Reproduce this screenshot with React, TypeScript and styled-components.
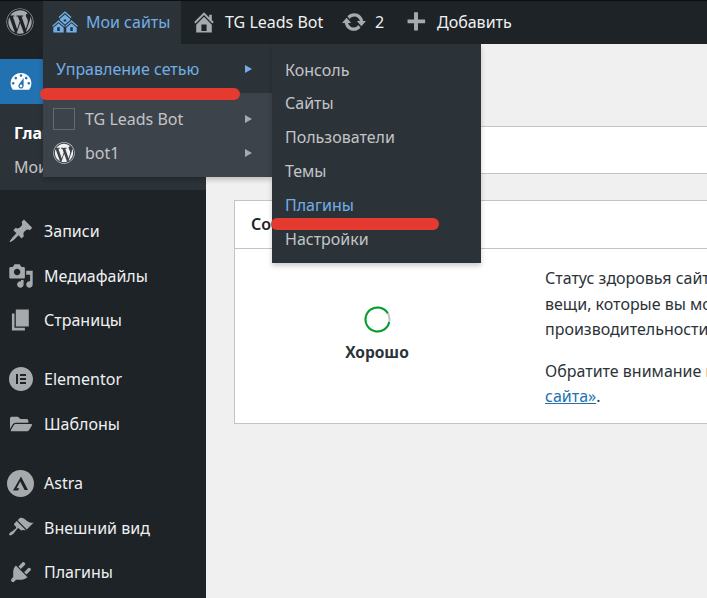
import React from 'react'
import styled, { createGlobalStyle } from 'styled-components'
import { FaWordpress, FaFolderOpen } from 'react-icons/fa'
import { SiElementor } from 'react-icons/si'

const FONT = `"Noto Sans", "Open Sans", sans-serif`

const GlobalStyle = createGlobalStyle`
  html, body {
    margin: 0;
    padding: 0;
    overflow: hidden;
    background: #f0f0f1;
    font-family: ${FONT};
  }
`

const ICONS = {
  multisite:
    'M14.27 6.87L10 3.14 5.73 6.87 5 6.14l5-4.38 5 4.38zM14 8.42l-4.05 3.43L6 8.38v-.74l4-3.5 4 3.5v.78zM11 9.7V8H9v1.7h2zm-1.73 4.03L5 10 .73 13.73 0 13l5-4.38L10 13zm10 0L15 10l-4.27 3.73L10 13l5-4.38L20 13zM5 11l4 3.5V18H1v-3.5zm10 0l4 3.5V18h-8v-3.5zM6 17v-3H4v3h2zm10 0v-3h-2v3h2z',
  home: 'M16 8.5l1.53 1.53-1.06 1.06L10 4.62l-6.47 6.47-1.06-1.06L10 2.5l4 4v-2h2v4zm-6-2.46l6 5.99V18H4v-5.97zM12 17v-5H8v5h4z',
  update:
    'M10.2 3.28c3.53 0 6.43 2.61 6.92 6h2.08l-3.5 4-3.5-4h2.32c-.45-1.97-2.21-3.45-4.32-3.45-1.45 0-2.73.71-3.54 1.78L4.95 5.66C6.23 4.2 8.11 3.28 10.2 3.28zm-.4 13.44c-3.52 0-6.43-2.61-6.92-6H.8l3.5-4c1.17 1.33 2.33 2.67 3.5 4H5.48c.45 1.97 2.21 3.45 4.32 3.45 1.45 0 2.73-.71 3.54-1.78l1.71 1.95c-1.28 1.46-3.15 2.38-5.25 2.38z',
  plus: 'M17 8v3h-5.5v5.5h-3V11H3.500V8h5V2.500h3V8z',
  dashboard:
    'M3.76 16h12.48c1.1-1.37 1.76-3.11 1.76-5 0-4.42-3.58-8-8-8s-8 3.58-8 8c0 1.89.66 3.63 1.76 5zM10 4c.55 0 1 .45 1 1s-.45 1-1 1-1-.45-1-1 .45-1 1-1zM6 6c.55 0 1 .45 1 1s-.45 1-1 1-1-.45-1-1 .45-1 1-1zm8 0c.55 0 1 .45 1 1s-.45 1-1 1-1-.45-1-1 .45-1 1-1zm-5.37 5.55L12 7v6c0 1.1-.9 2-2 2s-2-.9-2-2c0-.57.24-1.08.63-1.45zM4 10c.55 0 1 .45 1 1s-.45 1-1 1-1-.45-1-1 .45-1 1-1zm12 0c.55 0 1 .45 1 1s-.45 1-1 1-1-.45-1-1 .45-1 1-1zm-5 3c0-.55-.45-1-1-1s-1 .45-1 1 .45 1 1 1 1-.45 1-1z',
  post: 'M10.44 3.02l1.82-1.82 6.36 6.35-1.83 1.82c-1.05-.68-2.48-.57-3.41.36l-.75.75c-.92.93-1.04 2.35-.35 3.41l-1.83 1.82-2.41-2.41-2.8 2.79c-.42.42-3.38 2.71-3.8 2.29s1.86-3.39 2.28-3.81l2.79-2.79L4.100 9.360l1.83-1.82c1.05.69 2.48.57 3.4-.36l.75-.75c.93-.92 1.05-2.35.36-3.41z',
  media:
    'M13 11V4c0-.55-.45-1-1-1h-1.67L9 1H5L3.67 3H2c-.55 0-1 .45-1 1v7c0 .55.45 1 1 1h10c.55 0 1-.45 1-1zM7 4.500c1.380 0 2.500 1.120 2.500 2.500S8.380 9.500 7 9.500 4.500 8.380 4.500 7 5.620 4.500 7 4.500zM14 6h5v10.500c0 1.380-1.120 2.500-2.500 2.500S14 17.880 14 16.500s1.120-2.500 2.500-2.500c.17 0 .34.02.5.05V9h-3V6zm-4 8.050V13h2v3.500c0 1.380-1.120 2.500-2.500 2.500S7 17.880 7 16.500 8.120 14 9.500 14c.17 0 .34.02.5.05z',
  page: 'M6 15V2h10v13H6zm-1 1h8v2H3V5h2v11z',
  appearance:
    'M14.48 11.06L7.41 3.99l1.5-1.5c.5-.56 2.3-.47 3.51.32 1.21.8 1.43 1.28 2.91 2.100 1.180.64 2.450 1.260 4.450.85zm-.71.71L6.700 4.700 4.930 6.470c-.39.39-.39 1.020 0 1.410l1.060 1.060c.39.39.39 1.030 0 1.420-.6.6-1.430 1.110-2.210 1.690-.35.26-.7.53-1.010.84C1.430 13.230.4 14.750 1.100 15.450c.7.7 2.220-.33 3.560-1.670.31-.31.58-.66.84-1.010.58-.78 1.090-1.610 1.690-2.210.39-.39 1.030-.39 1.420 0l1.060 1.060c.39.39 1.020.39 1.410 0z',
  plugins:
    'M13.110 4.360L9.870 7.600 8 5.730l3.240-3.240c.35-.34 1.050-.2 1.560.32.52.51.66 1.210.31 1.550zm-8 1.770l.91-1.120 9.010 9.010-1.190.84c-.71.71-2.630 1.160-3.820 1.160H6.140L4.900 17.260c-.59.59-1.540.59-2.120 0-.59-.58-.59-1.530 0-2.120l1.240-1.240v-3.880c0-1.130.4-3.190 1.090-3.890zm7.260 3.970l3.240-3.240c.34-.35 1.040-.21 1.550.31.52.51.66 1.210.31 1.550l-3.240 3.250z',
}

const Dashicon: React.FC<{ d: string; size?: number }> = ({ d, size = 26 }) => (
  <svg width={size} height={size} viewBox="0 0 20 20" fill="currentColor">
    <path d={d} />
  </svg>
)

const AstraIcon = () => (
  <svg width="27" height="27" viewBox="0 0 27 27">
    <circle cx="13.5" cy="13.5" r="13.5" fill="currentColor" />
    <path d="M14 6.5 L21 20 H17.6 L13.2 11.4 L9.6 18.2 L12.4 18.2 L11 20.5 H6 Z" fill="#1d2327" />
  </svg>
)

const HealthRing = () => (
  <svg width="27" height="27" viewBox="0 0 27 27" fill="none">
    <circle cx="13.5" cy="13.5" r="12" stroke="#c3c4c7" strokeWidth="2" />
    <circle cx="13.5" cy="13.5" r="12" stroke="#00a32a" strokeWidth="2" strokeDasharray="66 75.4" transform="rotate(12 13.5 13.5)" />
  </svg>
)

const Page = styled.div`
  position: relative;
  width: 707px;
  height: 598px;
  overflow: hidden;
  background: #f0f0f1;
`

const TopBar = styled.header`
  display: flex;
  align-items: stretch;
  height: 43px;
  border-top: 1px solid #0c0e10;
  background: #1d2327;
  color: #f0f0f1;
  font-size: 16px;
`

const BarItem = styled.div<{ $active?: boolean; $width: number; $pad?: number }>`
  display: flex;
  align-items: center;
  gap: 8px;
  width: ${(p) => p.$width}px;
  padding-left: ${(p) => p.$pad ?? 10}px;
  padding-bottom: 1px;
  box-sizing: border-box;
  background: ${(p) => (p.$active ? '#2c3338' : 'transparent')};
  color: ${(p) => (p.$active ? '#72aee6' : '#f0f0f1')};
  white-space: nowrap;
  svg {
    flex: none;
    color: ${(p) => (p.$active ? '#72aee6' : '#a7aaad')};
  }
`

const Layout = styled.div`
  display: flex;
  height: 554px;
`

const Sidebar = styled.nav`
  flex: none;
  width: 206px;
  padding-top: 15px;
  background: #1d2327;
  color: #f0f0f1;
  font-size: 16px;
`

const ActiveRow = styled.div`
  display: flex;
  align-items: center;
  height: 45px;
  padding-left: 8px;
  background: #2271b1;
  color: #fff;
`

const SubPanel = styled.div`
  height: 68px;
  padding: 9px 14px;
  margin-bottom: 19px;
  background: #2c3338;
`

const SubLink = styled.div<{ $current?: boolean }>`
  height: 34px;
  line-height: 40px;
  font-weight: ${(p) => (p.$current ? 700 : 400)};
  color: ${(p) => (p.$current ? '#fff' : '#c3c4c7')};
`

const MenuGroup = styled.div`
  margin-bottom: 14.4px;
`

const MenuRow = styled.div`
  display: flex;
  align-items: center;
  height: 44.6px;
  color: #f0f0f1;
`

const MenuIcon = styled.span`
  flex: none;
  display: flex;
  align-items: center;
  justify-content: center;
  width: 44px;
  height: 100%;
  padding-right: 3px;
  box-sizing: border-box;
  color: #a7aaad;
`

const Main = styled.main`
  flex: 1;
  min-width: 0;
  padding-top: 82px;
`

const NoticeBar = styled.div`
  height: 46px;
  border-top: 1px solid #c3c4c7;
  border-bottom: 1px solid #c3c4c7;
  background: #fff;
`

const Card = styled.section`
  width: 700px;
  margin: 26px 0 0 28px;
  border: 1px solid #c3c4c7;
  background: #fff;
  color: #2c3338;
`

const CardTitle = styled.h2`
  margin: 0;
  height: 47px;
  padding-left: 16px;
  border-bottom: 1px solid #c3c4c7;
  color: #1d2327;
  font-size: 16px;
  font-weight: 600;
  line-height: 47px;
  white-space: nowrap;
`

const CardBody = styled.div`
  display: grid;
  grid-template-columns: 284px 1fr;
  gap: 26px;
  height: 174px;
`

const HealthColumn = styled.div`
  display: flex;
  flex-direction: column;
  align-items: center;
  padding-top: 57px;
`

const HealthLabel = styled.div`
  margin-top: 6px;
  font-size: 15.5px;
  font-weight: 700;
  line-height: 26px;
`

const HealthText = styled.div`
  padding-top: 17px;
  font-size: 16px;
  line-height: 25.5px;
  white-space: nowrap;
`

const Para = styled.p`
  margin: 0 0 16px;
`

const TextLink = styled.a`
  color: #2271b1;
  text-decoration: underline;
`

const FlyoutMenu = styled.div`
  position: absolute;
  top: 44px;
  left: 43px;
  width: 229px;
  font-size: 16px;
  box-shadow: 0 3px 5px rgba(0, 0, 0, 0.2);
`

const FlyoutSection = styled.div<{ $light?: boolean }>`
  height: ${(p) => (p.$light ? 84 : 49)}px;
  padding-top: ${(p) => (p.$light ? 9 : 8)}px;
  box-sizing: border-box;
  background: ${(p) => (p.$light ? '#3c434a' : '#2c3338')};
`

const FlyoutRow = styled.div<{ $active?: boolean }>`
  display: flex;
  align-items: center;
  height: 34px;
  padding-left: ${(p) => (p.$active ? 13 : 10)}px;
  color: ${(p) => (p.$active ? '#72aee6' : '#c3c4c7')};
  white-space: nowrap;
`

const SiteBadge = styled.span`
  flex: none;
  display: flex;
  width: 22px;
  height: 22px;
  margin-right: 10px;
  color: #f0f0f1;
`

const BlankBlavatar = styled(SiteBadge)`
  box-sizing: border-box;
  border: 1px solid #646970;
`

const Caret = styled.span<{ $active?: boolean }>`
  width: 0;
  height: 0;
  margin-left: auto;
  margin-right: 20px;
  border-top: 4.5px solid transparent;
  border-bottom: 4.5px solid transparent;
  border-left: 7px solid ${(p) => (p.$active ? '#72aee6' : '#a7aaad')};
`

const SubMenu = styled.div`
  position: absolute;
  top: 44px;
  left: 272px;
  width: 209px;
  height: 219px;
  padding-top: 8.7px;
  box-sizing: border-box;
  background: #2c3338;
  font-size: 16px;
  box-shadow: 0 3px 5px rgba(0, 0, 0, 0.2);
`

const SubMenuRow = styled.div<{ $active?: boolean }>`
  display: flex;
  align-items: center;
  height: 33.8px;
  padding-left: 13px;
  color: ${(p) => (p.$active ? '#72aee6' : '#c3c4c7')};
`

// красные пометки поверх скриншота
const Marker = styled.div<{ $top: number; $left: number; $width: number }>`
  position: absolute;
  top: ${(p) => p.$top}px;
  left: ${(p) => p.$left}px;
  width: ${(p) => p.$width}px;
  height: 12px;
  border-radius: 6px;
  background: #e53a30;
`

const menuGroups = [
  [
    { label: 'Записи', icon: <Dashicon d={ICONS.post} /> },
    { label: 'Медиафайлы', icon: <Dashicon d={ICONS.media} /> },
    { label: 'Страницы', icon: <Dashicon d={ICONS.page} /> },
  ],
  [
    { label: 'Elementor', icon: <SiElementor size={24} /> },
    { label: 'Шаблоны', icon: <FaFolderOpen size={22} /> },
  ],
  [
    { label: 'Astra', icon: <AstraIcon /> },
    { label: 'Внешний вид', icon: <Dashicon d={ICONS.appearance} /> },
    { label: 'Плагины', icon: <Dashicon d={ICONS.plugins} /> },
  ],
]

const networkLinks = ['Консоль', 'Сайты', 'Пользователи', 'Темы', 'Плагины', 'Настройки']

const App: React.FC = () => {
  return (
    <Page>
      <GlobalStyle />
      <TopBar>
        <BarItem $width={43} $pad={6}>
          <FaWordpress size={28} />
        </BarItem>
        <BarItem $active $width={138} $pad={9}>
          <Dashicon d={ICONS.multisite} />
          Мои сайты
        </BarItem>
        <BarItem $width={150}>
          <Dashicon d={ICONS.home} />
          TG Leads Bot
        </BarItem>
        <BarItem $width={62}>
          <Dashicon d={ICONS.update} />2
        </BarItem>
        <BarItem $width={150}>
          <Dashicon d={ICONS.plus} />
          Добавить
        </BarItem>
      </TopBar>

      <Layout>
        <Sidebar>
          <ActiveRow>
            <Dashicon d={ICONS.dashboard} />
          </ActiveRow>
          <SubPanel>
            <SubLink $current>Главная</SubLink>
            <SubLink>Мои сайты</SubLink>
          </SubPanel>
          {menuGroups.map((group, i) => (
            <MenuGroup key={i}>
              {group.map((item) => (
                <MenuRow key={item.label}>
                  <MenuIcon>{item.icon}</MenuIcon>
                  {item.label}
                </MenuRow>
              ))}
            </MenuGroup>
          ))}
        </Sidebar>

        <Main>
          <NoticeBar />
          <Card>
            <CardTitle>Состояние сайта</CardTitle>
            <CardBody>
              <HealthColumn>
                <HealthRing />
                <HealthLabel>Хорошо</HealthLabel>
              </HealthColumn>
              <HealthText>
                <Para>
                  Статус здоровья сайта
                  <br />
                  вещи, которые вы можете
                  <br />
                  производительности и
                </Para>
                <Para>
                  Обратите внимание на раздел
                  <br />
                  <TextLink>сайта»</TextLink>.
                </Para>
              </HealthText>
            </CardBody>
          </Card>
        </Main>
      </Layout>

      <FlyoutMenu>
        <FlyoutSection>
          <FlyoutRow $active>
            Управление сетью
            <Caret $active />
          </FlyoutRow>
        </FlyoutSection>
        <FlyoutSection $light>
          <FlyoutRow>
            <BlankBlavatar />
            TG Leads Bot
            <Caret />
          </FlyoutRow>
          <FlyoutRow>
            <SiteBadge>
              <FaWordpress size={22} />
            </SiteBadge>
            bot1
            <Caret />
          </FlyoutRow>
        </FlyoutSection>
      </FlyoutMenu>

      <SubMenu>
        {networkLinks.map((label) => (
          <SubMenuRow key={label} $active={label === 'Плагины'}>
            {label}
          </SubMenuRow>
        ))}
      </SubMenu>

      <Marker $top={88} $left={40} $width={200} />
      <Marker $top={218} $left={271} $width={168} />
    </Page>
  )
}

export default App
